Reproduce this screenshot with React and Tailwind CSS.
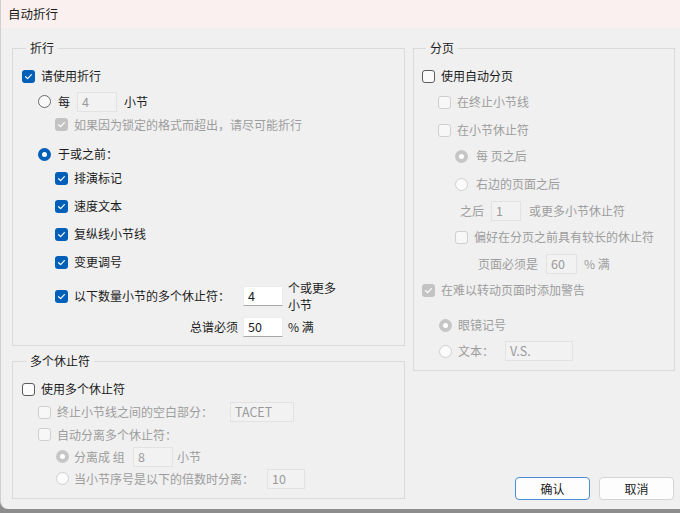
import React from 'react'

const Check = ({ checked, disabled }) => {
    const base = "w-[13px] h-[13px] rounded-[3px] flex items-center justify-center shrink-0"
    if (checked) {
        return (
            <span className={`${base} ${disabled ? "bg-[#c3c3c3]" : "bg-[#005fb8]"}`}>
                <svg width="9" height="9" viewBox="0 0 9 9">
                    <polyline points="1.6,4.7 3.6,6.6 7.4,2.6" fill="none" stroke="#fff" strokeWidth="1.2" strokeLinecap="round" strokeLinejoin="round" />
                </svg>
            </span>
        )
    }
    return <span className={`${base} border ${disabled ? "border-[#cfcfcf] bg-[#f7f7f7]" : "border-[#5c5c5c] bg-[#fbfbfb]"}`}></span>
}

const Radio = ({ checked, disabled }) => {
    const base = "w-[13px] h-[13px] rounded-full flex items-center justify-center shrink-0"
    if (checked) {
        return (
            <span className={`${base} ${disabled ? "bg-[#c6c6c6]" : "bg-[#005fb8]"}`}>
                <span className="w-[5px] h-[5px] rounded-full bg-white"></span>
            </span>
        )
    }
    return <span className={`${base} border ${disabled ? "border-[#d0d0d0] bg-[#fbfbfb]" : "border-[#6a6a6a] bg-[#f9f9f9]"}`}></span>
}

const Field = ({ value, disabled, w }) => (
    <span
        className={`${w} h-[20px] flex items-center px-[4px] text-[12.5px] shrink-0 ${disabled
            ? "bg-[#f2f2f2] border border-[#e2e2e2] text-[#9a9a9a]"
            : "bg-white border border-[#ececec] border-b-[#a8a8a8] text-[#1b1b1b]"}`}
    >
        {value}
    </span>
)

const Group = ({ title, className, children }) => (
    <fieldset className={`border border-[#dadada] ${className}`}>
        <legend className="ml-[4px] px-[4px] text-[12px] leading-[16px] text-[#1b1b1b]">{title}</legend>
        {children}
    </fieldset>
)

const off = "text-[#9d9d9d]"

const App = () => {
    return (
        <div className="w-[680px] h-[513px] bg-[#8d8d8d] text-[12px] leading-[16px]" style={{ fontFamily: '"Noto Sans CJK SC", "Noto Sans", sans-serif' }}>
            <div className="h-[509px] bg-[#f0f0f0] rounded-bl-[8px] border-l border-[#cfcfcf] flex flex-col overflow-hidden">
                {/* title bar */}
                <div className="h-[28px] bg-[#f9f0ef] flex items-center pl-[7px] text-[12.5px] text-[#1b1b1b] shrink-0">
                    自动折行
                </div>

                <div className="flex pt-[12px] pl-[11px]">
                    {/* left column */}
                    <div className="w-[393px] flex flex-col">
                        <Group title="折行" className="pl-[9px] pb-[7px]">
                            <div className="mt-[6px] h-[28px] flex items-center gap-[6px] text-[#1b1b1b]">
                                <Check checked />
                                <span>请使用折行</span>
                            </div>
                            <div className="h-[23px] flex items-center pl-[16px] text-[#1b1b1b]">
                                <Radio />
                                <span className="ml-[7px] w-[19px]">每</span>
                                <Field value="4" disabled w="w-[40px]" />
                                <span className="ml-[7px]">小节</span>
                            </div>
                            <div className="h-[23px] flex items-center gap-[6px] pl-[33px]">
                                <Check checked disabled />
                                <span className={off}>如果因为锁定的格式而超出，请尽可能折行</span>
                            </div>
                            <div className="mt-[8px] h-[20px] flex items-center gap-[7px] pl-[16px] text-[#1b1b1b]">
                                <Radio checked />
                                <span>于或之前：</span>
                            </div>
                            {["排演标记", "速度文本", "复纵线小节线", "变更调号"].map((t, i) => (
                                <div key={i} className="h-[28px] flex items-center gap-[6px] pl-[33px] text-[#1b1b1b]">
                                    <Check checked />
                                    <span>{t}</span>
                                </div>
                            ))}
                            <div className="h-[40px] flex items-center pl-[33px] text-[#1b1b1b]">
                                <div className="w-[188px] flex items-center gap-[6px]">
                                    <Check checked />
                                    <span>以下数量小节的多个休止符：</span>
                                </div>
                                <Field value="4" w="w-[40px]" />
                                <span className="ml-[5px] leading-[17px] w-[60px]">个或更多<br />小节</span>
                            </div>
                            <div className="h-[22px] flex items-center pl-[33px] text-[#1b1b1b]">
                                <span className="w-[188px] text-right pr-[5px]">总谱必须</span>
                                <Field value="50" w="w-[40px]" />
                                <span className="ml-[5px]">% 满</span>
                            </div>
                        </Group>

                        <Group title="多个休止符" className="mt-[7px] pl-[9px] pb-[8px]">
                            <div className="mt-[8px] h-[24px] flex items-center gap-[6px] text-[#1b1b1b]">
                                <Check />
                                <span>使用多个休止符</span>
                            </div>
                            <div className="h-[22px] flex items-center pl-[16px]">
                                <Check disabled />
                                <span className={`ml-[6px] w-[173px] ${off}`}>终止小节线之间的空白部分：</span>
                                <Field value="TACET" disabled w="w-[64px]" />
                            </div>
                            <div className="h-[23px] flex items-center gap-[6px] pl-[16px]">
                                <Check disabled />
                                <span className={off}>自动分离多个休止符：</span>
                            </div>
                            <div className="h-[21px] flex items-center pl-[34px]">
                                <Radio checked disabled />
                                <span className={`ml-[5px] w-[59px] ${off}`}>分离成 组</span>
                                <Field value="8" disabled w="w-[40px]" />
                                <span className={`ml-[4px] ${off}`}>小节</span>
                            </div>
                            <div className="h-[23px] flex items-center pl-[34px]">
                                <Radio disabled />
                                <span className={`ml-[5px] w-[193px] ${off}`}>当小节序号是以下的倍数时分离：</span>
                                <Field value="10" disabled w="w-[38px]" />
                            </div>
                        </Group>
                    </div>

                    {/* right column */}
                    <div className="ml-[8px] w-[262px] flex flex-col">
                        <Group title="分页" className="pl-[8px] pb-[8px]">
                            <div className="mt-[8px] h-[24px] flex items-center gap-[6px] text-[#1b1b1b]">
                                <Check />
                                <span>使用自动分页</span>
                            </div>
                            <div className="h-[28px] flex items-center gap-[6px] pl-[16px]">
                                <Check disabled />
                                <span className={off}>在终止小节线</span>
                            </div>
                            <div className="h-[28px] flex items-center gap-[6px] pl-[16px]">
                                <Check disabled />
                                <span className={off}>在小节休止符</span>
                            </div>
                            <div className="h-[24px] flex items-center gap-[8px] pl-[33px]">
                                <Radio checked disabled />
                                <span className={off}>每 页之后</span>
                            </div>
                            <div className="h-[32px] flex items-center gap-[8px] pl-[33px]">
                                <Radio disabled />
                                <span className={off}>右边的页面之后</span>
                            </div>
                            <div className="h-[22px] flex items-center pl-[38px]">
                                <span className={`w-[31px] ${off}`}>之后</span>
                                <Field value="1" disabled w="w-[30px]" />
                                <span className={`ml-[8px] ${off}`}>或更多小节休止符</span>
                            </div>
                            <div className="h-[30px] flex items-center gap-[6px] pl-[33px]">
                                <Check disabled />
                                <span className={off}>偏好在分页之前具有较长的休止符</span>
                            </div>
                            <div className="h-[24px] flex items-center pl-[56px]">
                                <span className={`w-[68px] ${off}`}>页面必须是</span>
                                <Field value="60" disabled w="w-[31px]" />
                                <span className={`ml-[7px] ${off}`}>% 满</span>
                            </div>
                            <div className="h-[28px] flex items-center gap-[6px]">
                                <Check checked disabled />
                                <span className={off}>在难以转动页面时添加警告</span>
                            </div>
                            <div className="mt-[6px] h-[30px] flex items-center gap-[6px] pl-[17px]">
                                <Radio checked disabled />
                                <span className={off}>眼镜记号</span>
                            </div>
                            <div className="h-[22px] flex items-center pl-[17px]">
                                <Radio disabled />
                                <span className={`ml-[6px] w-[47px] ${off}`}>文本：</span>
                                <Field value="V.S." disabled w="w-[68px]" />
                            </div>
                        </Group>

                        <div className="mt-[106px] flex justify-end gap-[9px] pr-[1px]">
                            <button className="w-[75px] h-[23px] rounded-[4px] bg-[#fdfdfd] border border-[#4a8fd6] text-[#1b1b1b] text-[12px]">确认</button>
                            <button className="w-[75px] h-[23px] rounded-[4px] bg-[#fdfdfd] border border-[#d5d5d5] text-[#1b1b1b] text-[12px]">取消</button>
                        </div>
                    </div>
                </div>
            </div>
        </div>
    )
}

export default App
